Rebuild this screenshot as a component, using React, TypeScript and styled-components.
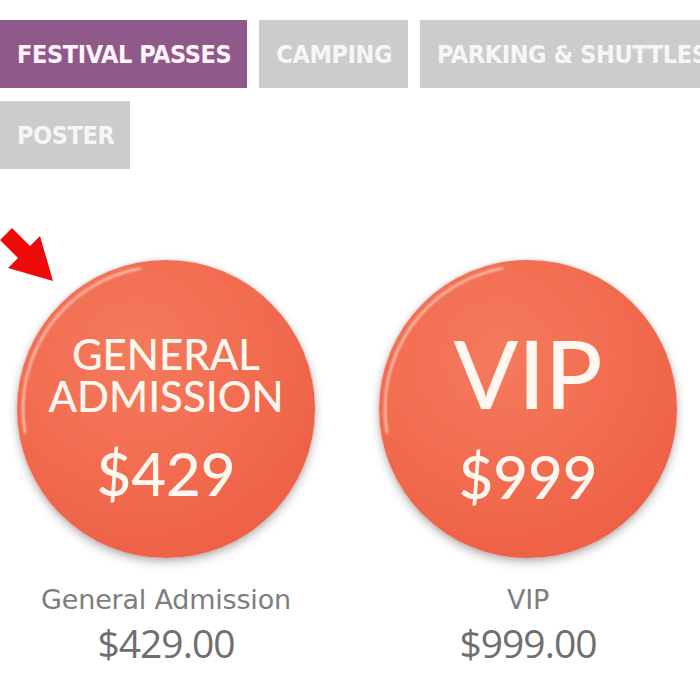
import React from "react";
import styled, { createGlobalStyle } from "styled-components";

const GlobalStyle = createGlobalStyle`
  body {
    margin: 0;
    background: #ffffff;
    overflow: hidden;
  }
`;

const Page = styled.div`
  width: 700px;
  height: 700px;
  overflow: hidden;
  position: relative;
`;

const TabBar = styled.div`
  width: 790px;
  display: flex;
  flex-wrap: wrap;
  gap: 13px 12px;
  padding-top: 20px;
`;

const Tab = styled.div<{ $active?: boolean }>`
  height: 68px;
  display: flex;
  align-items: center;
  padding: 0 16px 0 17px;
  background: ${(p) => (p.$active ? "#8f5a8a" : "#cccccc")};
  color: ${(p) => (p.$active ? "#fff4fb" : "#f6f6f6")};
  font-family: "DejaVu Sans Condensed", "Liberation Sans", sans-serif;
  font-weight: bold;
  font-size: 25px;
  letter-spacing: -0.4px;
  white-space: nowrap;
`;

const Products = styled.div`
  display: flex;
  gap: 60px;
  padding: 91px 0 0 15px;
`;

const Product = styled.div`
  display: flex;
  flex-direction: column;
  align-items: center;
  width: 302px;
`;

const Badge = styled.div`
  position: relative;
  width: 298px;
  height: 298px;
  border-radius: 50%;
  background: radial-gradient(
    circle at 40% 32%,
    #f57a5c 0%,
    #f26c50 45%,
    #ed6045 80%,
    #e35a41 100%
  );
  box-shadow: 0 4px 10px rgba(60, 40, 40, 0.35), 0 0 3px rgba(0, 0, 0, 0.15);
  display: flex;
  align-items: center;
  justify-content: center;
  color: #fff7f0;
  font-family: Lato, "Open Sans", sans-serif;
  text-align: center;

  &::before {
    content: "";
    position: absolute;
    inset: 5px;
    border-radius: 50%;
    border: 2px solid transparent;
    border-top-color: rgba(255, 235, 225, 0.8);
    transform: rotate(-55deg);
    filter: blur(0.8px);
  }
`;

const BadgeBody = styled.div<{ $shift: number }>`
  display: flex;
  flex-direction: column;
  align-items: center;
  padding-top: ${(p) => p.$shift}px;
`;

const BadgeTitle = styled.div<{ $size: number }>`
  font-size: ${(p) => p.$size}px;
  line-height: ${(p) => (p.$size > 60 ? p.$size : 42)}px;
  font-weight: 500;
`;

const BadgePrice = styled.div`
  font-size: 60px;
  line-height: 60px;
  font-weight: 500;
  margin-top: 26px;
`;

const Name = styled.div`
  margin-top: 26px;
  font-family: "DejaVu Sans", "Open Sans", sans-serif;
  font-size: 27px;
  line-height: 32px;
  color: #7d7d7d;
  letter-spacing: -0.2px;
`;

const Price = styled.div`
  margin-top: 6px;
  font-family: "Open Sans", Lato, sans-serif;
  font-size: 39px;
  line-height: 42px;
  color: #6f6f6f;
  letter-spacing: -1px;
`;

const Arrow = styled.svg`
  position: absolute;
  left: 0;
  top: 215px;
`;

const tabs = ["FESTIVAL PASSES", "CAMPING", "PARKING & SHUTTLES", "POSTER"];

const products = [
  { lines: ["GENERAL", "ADMISSION"], size: 42, badgePrice: "$429", name: "General Admission", price: "$429.00", shift: 18 },
  { lines: ["VIP"], size: 95, badgePrice: "$999", name: "VIP", price: "$999.00", shift: 12 },
];

const App: React.FC = () => {
  return (
    <Page>
      <GlobalStyle />
      <TabBar>
        {tabs.map((t, i) => (
          <Tab key={t} $active={i === 0}>
            {t}
          </Tab>
        ))}
      </TabBar>
      <Products>
        {products.map((p) => (
          <Product key={p.name}>
            <Badge>
              <BadgeBody $shift={p.shift}>
                {p.lines.map((l) => (
                  <BadgeTitle key={l} $size={p.size}>
                    {l}
                  </BadgeTitle>
                ))}
                <BadgePrice>{p.badgePrice}</BadgePrice>
              </BadgeBody>
            </Badge>
            <Name>{p.name}</Name>
            <Price>{p.price}</Price>
          </Product>
        ))}
      </Products>
      <Arrow width="70" height="80" viewBox="0 0 70 80">
        <polygon
          points="12,13 30,31 40,21 53,66 8,53 18,43 0,25"
          fill="#ee0a0a"
        />
      </Arrow>
    </Page>
  );
};

export default App;
